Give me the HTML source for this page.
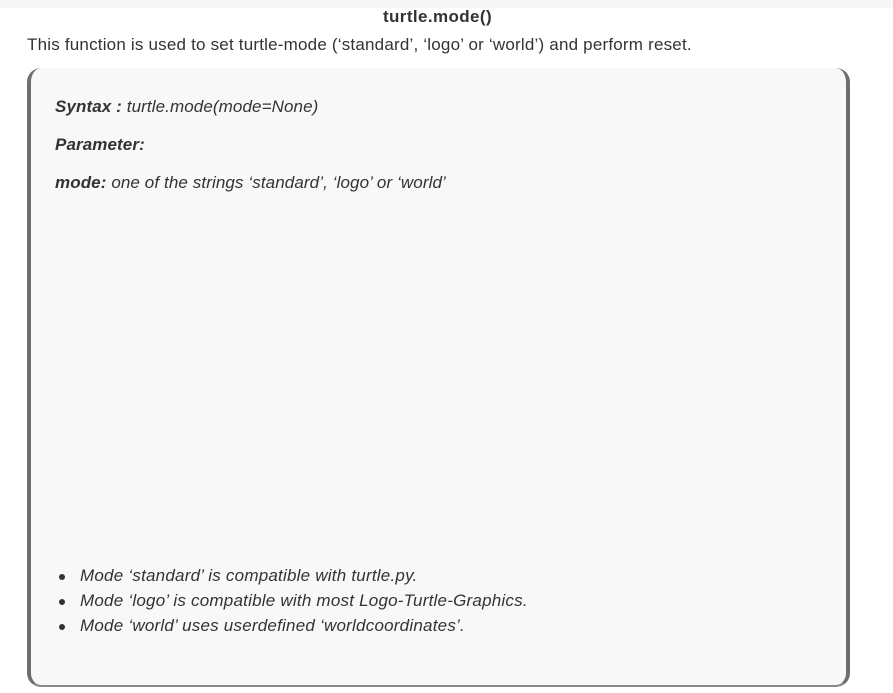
<!DOCTYPE html>
<html><head><style>
body{margin:0;width:893px;height:693px;background:#fff;font-family:"Liberation Sans",sans-serif;color:#333;overflow:hidden;position:relative}
.top{position:absolute;left:0;top:0;width:893px;height:8px;background:#f7f7f7}
.t{position:absolute;top:7px;left:0;width:875px;text-align:center;font-weight:bold;font-size:17px;letter-spacing:0.4px;color:#333}
.p{position:absolute;top:35px;left:27px;font-size:17px;letter-spacing:0.2px;color:#333;white-space:nowrap}
.box{position:absolute;left:27px;top:68px;width:815px;height:617px;background:#f8f8f8;border-left:4px solid #6e6e6e;border-right:4px solid #6e6e6e;border-bottom:2px solid #888;border-radius:14px}
.l{position:absolute;left:55px;font-size:17px;letter-spacing:0.1px;font-style:italic;color:#333;white-space:nowrap}
.l b{font-weight:bold}
.dot{position:absolute;left:59px;width:6px;height:6px;border-radius:50%;background:#333}
.bl{position:absolute;left:80px;font-size:17px;font-style:italic;color:#333;white-space:nowrap;letter-spacing:0.22px}
</style></head><body>
<div class="top"></div>
<div class="t">turtle.mode()</div>
<div class="p">This function is used to set turtle-mode (‘standard’, ‘logo’ or ‘world’) and perform reset.</div>
<div class="box"></div>
<div class="l" style="top:97px"><b>Syntax :</b> turtle.mode(mode=None)</div>
<div class="l" style="top:135px"><b>Parameter:</b></div>
<div class="l" style="top:173px"><b>mode:</b> one of the strings ‘standard’, ‘logo’ or ‘world’</div>
<div class="dot" style="top:574px"></div><div class="bl" style="top:566px">Mode ‘standard’ is compatible with turtle.py.</div>
<div class="dot" style="top:599px"></div><div class="bl" style="top:591px">Mode ‘logo’ is compatible with most Logo-Turtle-Graphics.</div>
<div class="dot" style="top:624px"></div><div class="bl" style="top:616px">Mode ‘world’ uses userdefined ‘worldcoordinates’.</div>
</body></html>
